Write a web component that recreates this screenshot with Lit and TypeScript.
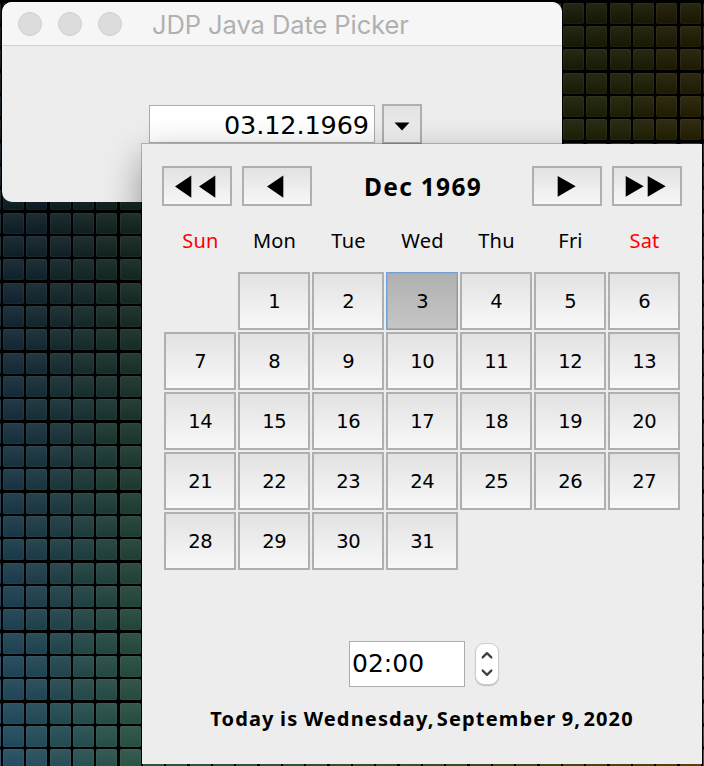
import { LitElement, html, css, svg } from "lit";
import { customElement, property } from "lit/decorators.js";
import { classMap } from "lit/directives/class-map.js";

const PITCH = 23.33;
const STOPS: [number, number[]][] = [
  [0, [32, 74, 100]],
  [130, [40, 82, 68]],
  [350, [52, 78, 40]],
  [570, [62, 74, 12]],
  [704, [80, 66, 0]],
];

function tileColor(x: number, y: number): string {
  let i = 0;
  while (i < STOPS.length - 2 && x > STOPS[i + 1][0]) i++;
  const [x0, a] = STOPS[i];
  const [x1, b] = STOPS[i + 1];
  const t = Math.max(0, (x - x0) / (x1 - x0));
  const base = 0.14 + 0.2 * (x / 704);
  const k = base + (1 - base) * (y / 766);
  return `rgb(${a.map((v, n) => Math.round((v + (b[n] - v) * t) * k)).join(",")})`;
}

@customElement("tile-wallpaper")
export class TileWallpaper extends LitElement {
  static styles = css`
    :host, svg { display: block; }
  `;
  render() {
    const tiles = [];
    for (let r = -1; r < 33; r++) {
      for (let c = -1; c < 31; c++) {
        const x = Math.round(3 + c * PITCH);
        const y = Math.round(2.7 + r * PITCH);
        tiles.push(svg`<rect x=${x} y=${y} width="21" height="21" rx="1.5" fill=${tileColor(x + 10, y)}></rect>
          <rect x=${x} y=${y} width="21" height="21" rx="1.5" fill="url(#sheen)"></rect>
          <rect x=${x + 0.5} y=${y + 0.5} width="20" height="20" rx="1.5" fill="none" stroke="#fff" stroke-opacity=".04"></rect>`);
      }
    }
    return html`<svg width="704" height="766" viewBox="0 0 704 766">
      <defs><linearGradient id="sheen" x1="0" y1="0" x2="0" y2="1">
        <stop offset="0" stop-color="#fff" stop-opacity=".07"></stop>
        <stop offset="1" stop-color="#fff" stop-opacity="0"></stop>
      </linearGradient></defs>
      <rect width="704" height="766" fill="#000"></rect>${tiles}</svg>`;
  }
}

const ARROWS: Record<string, string> = {
  first: "M13 20.5L29.3 9.5V31.8ZM37 20.5L53.3 9.5V31.8Z",
  prev: "M25 20.5L41.3 9.5V31.8Z",
  next: "M25.7 10V30.7L43.7 20.3Z",
  last: "M13.7 10V30.7L31.7 20.3ZM35.7 10V30.7L53.7 20.3Z",
};

@customElement("nav-button")
export class NavButton extends LitElement {
  @property() kind = "prev";
  static styles = css`
    :host { display: block; }
    .btn {
      box-sizing: border-box; display: block; width: 70px; height: 40px; padding: 0;
      border: 2px solid #afafaf; border-radius: 0;
      background: linear-gradient(#e2e2e2, #f7f7f7);
    }
    svg { display: block; margin: -2px; }
  `;
  render() {
    return html`<button class="btn"><svg width="70" height="40"><path d=${ARROWS[this.kind]}></path></svg></button>`;
  }
}

@customElement("date-popup")
export class DatePopup extends LitElement {
  static styles = css`
    :host {
      box-sizing: border-box; display: flex; flex-direction: column; align-items: center;
      width: 560px; height: 620px; padding-top: 22px; background: #ededed; color: #000;
      font-family: "Noto Sans", sans-serif;
    }
    .nav { display: flex; gap: 10px; width: 520px; height: 40px; }
    .month { flex: 1; text-align: center; font-size: 24.5px; line-height: 42px; font-weight: 700; letter-spacing: 1.3px; text-indent: 2px; }
    .names, .days { display: grid; grid-template-columns: repeat(7, 72px); column-gap: 2px; }
    .names { height: 66px; line-height: 70px; font-size: 20px; text-align: center; letter-spacing: .2px; text-indent: 1px; }
    .red { color: #f00; }
    .days { grid-auto-rows: 58px; row-gap: 2px; height: 369px; align-content: start; }
    .day {
      box-sizing: border-box; border: 2px solid #afafaf; background: linear-gradient(#e2e2e2, #f8f8f8);
      font-family: "DejaVu Sans", sans-serif; font-size: 19.5px; line-height: 56px; text-align: center;
      letter-spacing: -.3px; text-indent: .7px;
    }
    .first { grid-column: 2; }
    .selected { border: 1px solid #70a0d5; line-height: 58px; background: linear-gradient(#b0b0b0, #c6c6c6); box-shadow: inset 0 0 0 1px #aaa; }
    .time { display: flex; gap: 10px; align-items: center; margin-left: 4px; }
    .clock {
      box-sizing: border-box; width: 116px; height: 46px; padding-left: 2px; border: 1px solid #acacac;
      background: #fff; font: 25px/43px "DejaVu Sans", sans-serif;
    }
    .spinner { box-sizing: border-box; width: 24px; height: 42px; border-radius: 9px; border: 1px solid #ccc; background: #fff; box-shadow: 0 1px 1px #bbb; }
    .spinner svg { display: block; margin: -1px; }
    .today { margin-top: 15px; font-size: 20px; line-height: 34px; font-weight: 700; white-space: nowrap; letter-spacing: .98px; word-spacing: -1px; }
    .tight { margin-left: -3px; }
    .lead { letter-spacing: 1.15px; }
  `;
  render() {
    const names = ["Sun", "Mon", "Tue", "Wed", "Thu", "Fri", "Sat"];
    const days = Array.from({ length: 31 }, (_, i) => i + 1);
    return html`
      <div class="nav">
        <nav-button kind="first"></nav-button><nav-button kind="prev"></nav-button>
        <div class="month">Dec 1969</div>
        <nav-button kind="next"></nav-button><nav-button kind="last"></nav-button>
      </div>
      <div class="names">${names.map((n, i) => html`<span class=${classMap({ red: i % 6 === 0 })}>${n}</span>`)}</div>
      <div class="days">${days.map((d) => html`<div class=${classMap({ day: true, first: d === 1, selected: d === 3 })}>${d}</div>`)}</div>
      <div class="time">
        <div class="clock">02:00</div>
        <div class="spinner"><svg width="24" height="42" fill="none" stroke="#444" stroke-width="2.4" stroke-linecap="round" stroke-linejoin="round">
          <path d="M7.7 14.4L12 10.2L16.3 14.4M7.7 27.6L12 31.8L16.3 27.6"></path></svg></div>
      </div>
      <div class="today"><span class="lead">Today is Wednesday,</span> <span class="tight lead">September 9,</span> <span class="tight lead">2020</span></div>`;
  }
}

@customElement("app-root")
export class AppRoot extends LitElement {
  static styles = css`
    :host { display: block; position: relative; width: 704px; height: 766px; overflow: hidden; background: #000; }
    .window {
      position: absolute; left: 2px; top: 2px; width: 560px; height: 200px; border-radius: 10px;
      overflow: hidden; background: #ededed;
    }
    .bar {
      box-sizing: border-box; display: flex; align-items: center; gap: 16px; height: 44px; padding-left: 16px;
      background: #f6f6f6; border-bottom: 1px solid #d1d1d1;
    }
    .dot { box-sizing: border-box; width: 24px; height: 24px; border-radius: 50%; border: 1px solid #cfcfcf; background: #dcdcdc; }
    .title { margin-left: 14px; font: 25.5px/44px Inter, sans-serif; color: #b0b0b0; white-space: nowrap; letter-spacing: -.08px; padding-top: 3px; }
    .fields { display: flex; gap: 7px; padding: 58px 0 0 147px; }
    .input {
      box-sizing: border-box; width: 226px; height: 38px; margin-top: 1px; padding-right: 5px; border: 1px solid #acacac;
      background: #fff; text-align: right; font: 25.5px/38px "DejaVu Sans", sans-serif; letter-spacing: -.1px;
    }
    .drop { box-sizing: border-box; width: 40px; height: 40px; padding: 0; border: 2px solid #afafaf; border-radius: 0; background: linear-gradient(#e2e2e2, #f2f2f2); }
    .drop svg { display: block; margin: -2px; }
    .shadow { position: absolute; left: 140px; top: 142px; width: 560px; height: 620px; box-shadow: 0 0 0 1px rgba(0,0,0,.22), 0 14px 36px rgba(0,0,0,.4); }
    date-popup { position: absolute; left: 142px; top: 144px; }
  `;
  render() {
    return html`
      <tile-wallpaper></tile-wallpaper>
      <div class="window">
        <div class="bar"><i class="dot"></i><i class="dot"></i><i class="dot"></i><span class="title">JDP Java Date Picker</span></div>
        <div class="fields">
          <div class="input">03.12.1969</div>
          <button class="drop"><svg width="40" height="40"><path d="M12.5 18.5H27.5L20 26.5Z"></path></svg></button>
        </div>
        <div class="shadow"></div>
      </div>
      <date-popup></date-popup>`;
  }
}
